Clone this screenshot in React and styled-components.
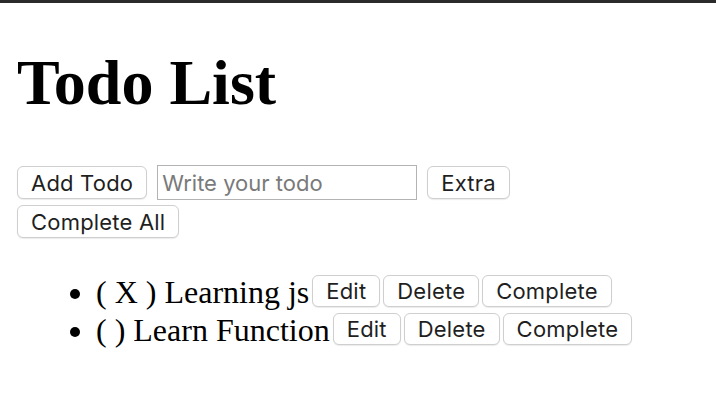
import React from "react";
import styled, { createGlobalStyle } from "styled-components";

const Global = createGlobalStyle`
  html, body { margin: 0; padding: 0; background: #ffffff; }
  body { font-family: "Liberation Serif", "Times New Roman", serif; color: #000; }
`;

const TopBar = styled.div`
  height: 3px;
  background: #2b2b2b;
`;

const Page = styled.main`
  padding: 0 17px;
`;

const Title = styled.h1`
  margin: 43px 0 0;
  height: 74px;
  font-size: 64px;
  line-height: 74px;
  font-weight: 700;
`;

const Controls = styled.div`
  margin-top: 45px;
  display: flex;
  flex-direction: column;
  align-items: flex-start;
  gap: 5px;
`;

const ControlRow = styled.div`
  display: flex;
  align-items: center;
  gap: 10px;
`;

const Button = styled.button`
  box-sizing: border-box;
  height: ${(p) => (p.$small ? 32 : 33)}px;
  padding: 0 13px;
  margin: ${(p) => (p.$small ? "2px 0 0" : "0")};
  font-family: "Inter", "Liberation Sans", sans-serif;
  font-size: 22px;
  letter-spacing: 0.2px;
  color: #1f1f1f;
  background: #ffffff;
  border: 1px solid #cfcfcf;
  border-radius: 6px;
  box-shadow: 0 1px 1px rgba(0, 0, 0, 0.08);
  white-space: nowrap;
`;

const TodoInput = styled.input`
  box-sizing: border-box;
  width: 260px;
  height: 35px;
  padding: 0 4px;
  margin: 0;
  font-family: "Inter", "Liberation Sans", sans-serif;
  font-size: 22px;
  color: #000;
  border: 1px solid #b3b3b3;
  border-radius: 0;
  outline: none;
  &::placeholder { color: #7a7a7a; }
`;

const List = styled.ul`
  margin: 35px 0 0;
  padding-left: 79px;
  list-style: disc;
  font-size: 32px;
`;

const Item = styled.li`
  height: 38px;
  line-height: 38px;
`;

const ItemRow = styled.div`
  display: flex;
  align-items: flex-start;
  gap: 3px;
`;

const ItemText = styled.span`
  white-space: pre;
  line-height: 38px;
`;

const todos = [
  { text: "( X ) Learning js" },
  { text: "( ) Learn Function" },
];

export default function App() {
  return (
    <>
      <Global />
      <TopBar />
      <Page>
        <Title>Todo List</Title>
        <Controls>
          <ControlRow>
            <Button>Add Todo</Button>
            <TodoInput placeholder="Write your todo" />
            <Button>Extra</Button>
          </ControlRow>
          <Button>Complete All</Button>
        </Controls>
        <List>
          {todos.map((t) => (
            <Item key={t.text}>
              <ItemRow>
                <ItemText>{t.text}</ItemText>
                <Button $small>Edit</Button>
                <Button $small>Delete</Button>
                <Button $small>Complete</Button>
              </ItemRow>
            </Item>
          ))}
        </List>
      </Page>
    </>
  );
}
